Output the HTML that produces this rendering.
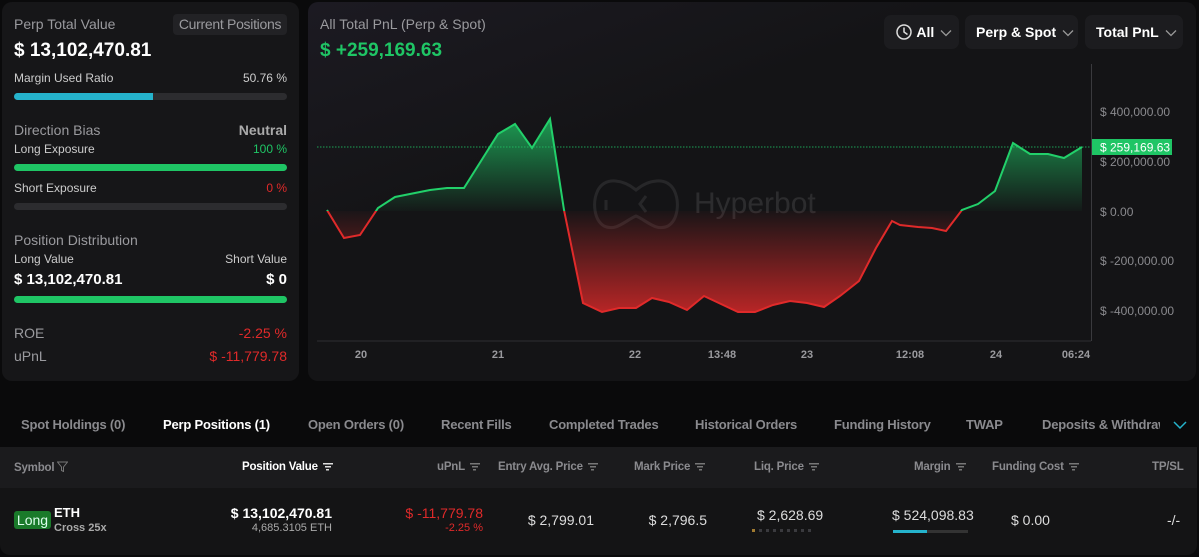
<!DOCTYPE html>
<html><head><meta charset="utf-8"><style>
*{box-sizing:border-box;margin:0;padding:0}
body{width:1199px;height:557px;background:#0a0a0b;font-family:"Liberation Sans",sans-serif;color:#fff;position:relative;overflow:hidden}
.a{position:absolute;white-space:nowrap}
.g{color:#9a9a9e}.gr{color:#1fc565}.rd{color:#e02a2a}
.bar{position:absolute;height:7px;border-radius:4px;background:#2c2c2f;left:14px;width:273px}
.btn{position:absolute;top:15px;height:34px;background:#1c1c1f;border-radius:7px;font-weight:bold;font-size:14px;line-height:34px;padding-left:11px;white-space:nowrap}
.tab{position:absolute;top:417px;font-size:13px;font-weight:bold;color:#8a8a8e;white-space:nowrap;letter-spacing:-0.2px}
.th{position:absolute;top:461px;font-size:11.5px;font-weight:bold;color:#8a8a8e;white-space:nowrap;letter-spacing:-0.2px}
.fi{display:inline-block;width:10px;height:8px;margin-left:5px;vertical-align:middle;background:linear-gradient(#777,#777) 0 0/10px 1.5px no-repeat,linear-gradient(#777,#777) 2px 3px/6px 1.5px no-repeat,linear-gradient(#777,#777) 3.5px 6px/3px 1.5px no-repeat}
.chev{vertical-align:middle;margin-left:6px}
</style></head><body>
<div class="a" style="left:2px;top:2px;width:297px;height:379px;background:#161618;border-radius:10px"></div>
<div class="a g" style="left:14px;top:16px;font-size:14px">Perp Total Value</div>
<div class="a" style="left:173px;top:14px;width:114px;height:21px;background:#222225;border-radius:4px;color:#9a9a9e;font-size:14px;line-height:21px;text-align:center;letter-spacing:-0.3px">Current Positions</div>
<div class="a" style="left:14px;top:40px;font-size:19px;font-weight:bold">$ 13,102,470.81</div>
<div class="a" style="left:14px;top:71px;font-size:12px;color:#ccc">Margin Used Ratio</div>
<div class="a" style="right:912px;top:71px;font-size:12px;color:#ccc">50.76 %</div>
<div class="bar" style="top:93px"></div><div class="bar" style="top:93px;width:139px;background:#25b3cc;border-radius:4px 0 0 4px"></div>
<div class="a g" style="left:14px;top:122px;font-size:14px">Direction Bias</div>
<div class="a" style="right:912px;top:122px;font-size:14px;font-weight:bold;color:#aaa">Neutral</div>
<div class="a" style="left:14px;top:142px;font-size:12px;color:#ccc">Long Exposure</div>
<div class="a gr" style="right:912px;top:142px;font-size:12px">100 %</div>
<div class="bar" style="top:164px;background:#1fc565"></div>
<div class="a" style="left:14px;top:181px;font-size:12px;color:#ccc">Short Exposure</div>
<div class="a rd" style="right:912px;top:181px;font-size:12px">0 %</div>
<div class="bar" style="top:203px"></div>
<div class="a g" style="left:14px;top:232px;font-size:14px">Position Distribution</div>
<div class="a" style="left:14px;top:252px;font-size:12px;color:#ccc">Long Value</div>
<div class="a" style="right:912px;top:252px;font-size:12px;color:#ccc">Short Value</div>
<div class="a" style="left:14px;top:271px;font-size:15px;font-weight:bold">$ 13,102,470.81</div>
<div class="a" style="right:912px;top:271px;font-size:15px;font-weight:bold">$ 0</div>
<div class="bar" style="top:296px;background:#1fc565"></div>
<div class="a g" style="left:14px;top:325px;font-size:14px">ROE</div>
<div class="a rd" style="right:912px;top:325px;font-size:14px">-2.25 %</div>
<div class="a g" style="left:14px;top:348px;font-size:14px">uPnL</div>
<div class="a rd" style="right:912px;top:348px;font-size:14px">$ -11,779.78</div>

<div class="a" style="left:308px;top:2px;width:888px;height:379px;background:linear-gradient(160deg,#1c1a22 0%,#141416 35%,#141416 100%);border-radius:10px"></div>
<div class="a g" style="left:320px;top:16px;font-size:14px">All Total PnL (Perp &amp; Spot)</div>
<div class="a gr" style="left:320px;top:40px;font-size:19px;font-weight:bold">$ +259,169.63</div>
<div class="btn" style="left:884px;width:75px"><svg width="18" height="18" viewBox="0 0 18 18" style="vertical-align:-4px"><circle cx="9" cy="9" r="7" fill="none" stroke="#ddd" stroke-width="1.5"/><path d="M9 4.5V9l3.5 2.5" fill="none" stroke="#ddd" stroke-width="1.5"/></svg> All<svg class="chev" width="12" height="8"><path d="M1 1.5l5 5 5-5" fill="none" stroke="#999" stroke-width="1.3"/></svg></div>
<div class="btn" style="left:965px;width:113px">Perp &amp; Spot<svg class="chev" width="12" height="8"><path d="M1 1.5l5 5 5-5" fill="none" stroke="#999" stroke-width="1.3"/></svg></div>
<div class="btn" style="left:1085px;width:98px">Total PnL<svg class="chev" width="12" height="8"><path d="M1 1.5l5 5 5-5" fill="none" stroke="#999" stroke-width="1.3"/></svg></div>
<svg class="a" style="left:0;top:0" width="1199" height="400">
<defs>
<linearGradient id="gg" x1="0" y1="119" x2="0" y2="211" gradientUnits="userSpaceOnUse"><stop offset="0" stop-color="#1fc565" stop-opacity=".75"/><stop offset="1" stop-color="#1fc565" stop-opacity=".03"/></linearGradient>
<linearGradient id="rg" x1="0" y1="211" x2="0" y2="312" gradientUnits="userSpaceOnUse"><stop offset="0" stop-color="#e02a2a" stop-opacity=".03"/><stop offset="1" stop-color="#e02a2a" stop-opacity=".8"/></linearGradient>
<clipPath id="up"><rect x="0" y="0" width="1199" height="211"/></clipPath>
<clipPath id="dn"><rect x="0" y="211" width="1199" height="200"/></clipPath>
<path id="ln" d="M327 210L344 238L360 235L378 208L395 197L430 190L447 188L464 188L498 134L515 124L532 148L550 119L564 210L583 303L602 312L619 308L636 308L652 298L669 302L687 310L704 296L721 304L738 312L755 312L773 305L790 301L807 303L824 307L840 296L859 281L876 248L892 221L900 225L918 227L932 228L946 231L962 210L978 204L995 191L1013 143L1030 154L1048 154L1064 158L1082 147"/>
</defs>
<g opacity=".13" fill="none" stroke="#aaa" stroke-width="3"><path d="M598 190c8-14 26-10 38 0 12-10 30-14 38 0 6 12 4 30-6 36-12 6-22-6-32-10-10 4-20 16-32 10-10-6-12-24-6-36z"/><path d="M606 200v10M646 196l-6 8 6 8"/></g>
<text x="694" y="213" font-size="30" fill="#fff" opacity=".1" font-family="Liberation Sans">Hyperbot</text>
<g clip-path="url(#up)"><path d="M327 210L344 238L360 235L378 208L395 197L430 190L447 188L464 188L498 134L515 124L532 148L550 119L564 210L583 303L602 312L619 308L636 308L652 298L669 302L687 310L704 296L721 304L738 312L755 312L773 305L790 301L807 303L824 307L840 296L859 281L876 248L892 221L900 225L918 227L932 228L946 231L962 210L978 204L995 191L1013 143L1030 154L1048 154L1064 158L1082 147V211H327Z" fill="url(#gg)"/><use href="#ln" fill="none" stroke="#22d06a" stroke-width="2"/></g>
<g clip-path="url(#dn)"><path d="M327 210L344 238L360 235L378 208L395 197L430 190L447 188L464 188L498 134L515 124L532 148L550 119L564 210L583 303L602 312L619 308L636 308L652 298L669 302L687 310L704 296L721 304L738 312L755 312L773 305L790 301L807 303L824 307L840 296L859 281L876 248L892 221L900 225L918 227L932 228L946 231L962 210L978 204L995 191L1013 143L1030 154L1048 154L1064 158L1082 147V211H327Z" fill="url(#rg)"/><use href="#ln" fill="none" stroke="#e02a2a" stroke-width="2"/></g>
<line x1="317" y1="147" x2="1091" y2="147" stroke="#1fc565" stroke-dasharray="1.5 1.5" opacity=".8"/>
<line x1="317" y1="341" x2="1091" y2="341" stroke="#2e2e32"/>
<line x1="1091.5" y1="64" x2="1091.5" y2="341" stroke="#3a3a3e"/>
<g font-size="12" fill="#8a8a8e" font-family="Liberation Sans"><text x="1100" y="116">$ 400,000.00</text><text x="1100" y="166">$ 200,000.00</text><text x="1100" y="216">$ 0.00</text><text x="1100" y="265">$ -200,000.00</text><text x="1100" y="315">$ -400,000.00</text></g>
<rect x="1092" y="139" width="80" height="16" fill="#1fc565"/><text x="1100" y="151.5" font-size="12" fill="#fff" font-family="Liberation Sans">$ 259,169.63</text>
<g font-size="11" fill="#9a9a9e" font-weight="bold" text-anchor="middle"><text x="361" y="358">20</text><text x="498" y="358">21</text><text x="635" y="358">22</text><text x="722" y="358">13:48</text><text x="807" y="358">23</text><text x="910" y="358">12:08</text><text x="996" y="358">24</text><text x="1076" y="358">06:24</text></g>
</svg>

<div class="tab" style="left:21px">Spot Holdings (0)</div>
<div class="tab" style="left:163px;color:#fff">Perp Positions (1)</div>
<div class="tab" style="left:308px">Open Orders (0)</div>
<div class="tab" style="left:441px">Recent Fills</div>
<div class="tab" style="left:549px">Completed Trades</div>
<div class="tab" style="left:695px">Historical Orders</div>
<div class="tab" style="left:834px">Funding History</div>
<div class="tab" style="left:966px">TWAP</div>
<div class="tab" style="left:1042px;width:118px;overflow:hidden">Deposits &amp; Withdrawals</div>
<svg class="a" style="left:1173px;top:420px" width="14" height="10"><path d="M1 2l6 6 6-6" fill="none" stroke="#25b3cc" stroke-width="1.5"/></svg>

<div class="a" style="left:0;top:447px;width:1197px;height:108px;background:#141415;border-radius:0 0 10px 10px"></div>
<div class="a" style="left:0;top:447px;width:1197px;height:41px;background:#1b1b1d"></div>
<div class="th" style="left:14px">Symbol <svg width="11" height="11" style="vertical-align:-1px"><path d="M.5 1h10L6.5 6v4.5L4.5 9.5V6z" fill="none" stroke="#777"/></svg></div>
<div class="th" style="left:242px;color:#fff">Position Value<span class="fi" style="background:linear-gradient(#ddd,#ddd) 0 0/10px 1.5px no-repeat,linear-gradient(#ddd,#ddd) 2px 3px/6px 1.5px no-repeat,linear-gradient(#ddd,#ddd) 3.5px 6px/3px 1.5px no-repeat"></span></div>
<div class="th" style="left:437px">uPnL<span class="fi"></span></div>
<div class="th" style="left:498px">Entry Avg. Price<span class="fi"></span></div>
<div class="th" style="left:634px">Mark Price<span class="fi"></span></div>
<div class="th" style="left:754px">Liq. Price<span class="fi"></span></div>
<div class="th" style="left:914px">Margin<span class="fi"></span></div>
<div class="th" style="left:992px">Funding Cost<span class="fi"></span></div>
<div class="th" style="left:1152px">TP/SL</div>

<div class="a" style="left:14px;top:511px;width:37px;height:18px;background:#1a7a2a;border-radius:3px;color:#dfe;font-size:14px;line-height:18px;text-align:center">Long</div>
<div class="a" style="left:54px;top:505px;font-size:13px;font-weight:bold">ETH</div>
<div class="a" style="left:54px;top:522px;font-size:11px;color:#aaa;font-weight:bold">Cross 25x</div>
<div class="a" style="right:867px;top:505px;font-size:14px;font-weight:bold">$ 13,102,470.81</div>
<div class="a" style="right:867px;top:522px;font-size:11px;color:#aaa">4,685.3105 ETH</div>
<div class="a rd" style="right:716px;top:505px;font-size:14px">$ -11,779.78</div>
<div class="a rd" style="right:716px;top:522px;font-size:11px">-2.25 %</div>
<div class="a" style="right:605px;top:512px;font-size:14px;color:#ddd">$ 2,799.01</div>
<div class="a" style="right:492px;top:512px;font-size:14px;color:#ddd">$ 2,796.5</div>
<div class="a" style="left:757px;top:507px;font-size:14px;color:#ddd">$ 2,628.69</div>
<div class="a" style="left:752px;top:529px;width:60px;height:3px;background:repeating-linear-gradient(90deg,#3a3a3e 0 3px,transparent 3px 7px)"></div>
<div class="a" style="left:752px;top:529px;width:3px;height:3px;background:#a07a30"></div>
<div class="a" style="left:892px;top:507px;font-size:14px;color:#ddd">$ 524,098.83</div>
<div class="a" style="left:893px;top:530px;width:75px;height:3px;background:#333"></div>
<div class="a" style="left:893px;top:530px;width:34px;height:3px;background:#25b3cc"></div>
<div class="a" style="left:1011px;top:512px;font-size:14px;color:#ddd">$ 0.00</div>
<div class="a" style="left:1167px;top:512px;font-size:14px;color:#ddd">-/-</div>
</body></html>
